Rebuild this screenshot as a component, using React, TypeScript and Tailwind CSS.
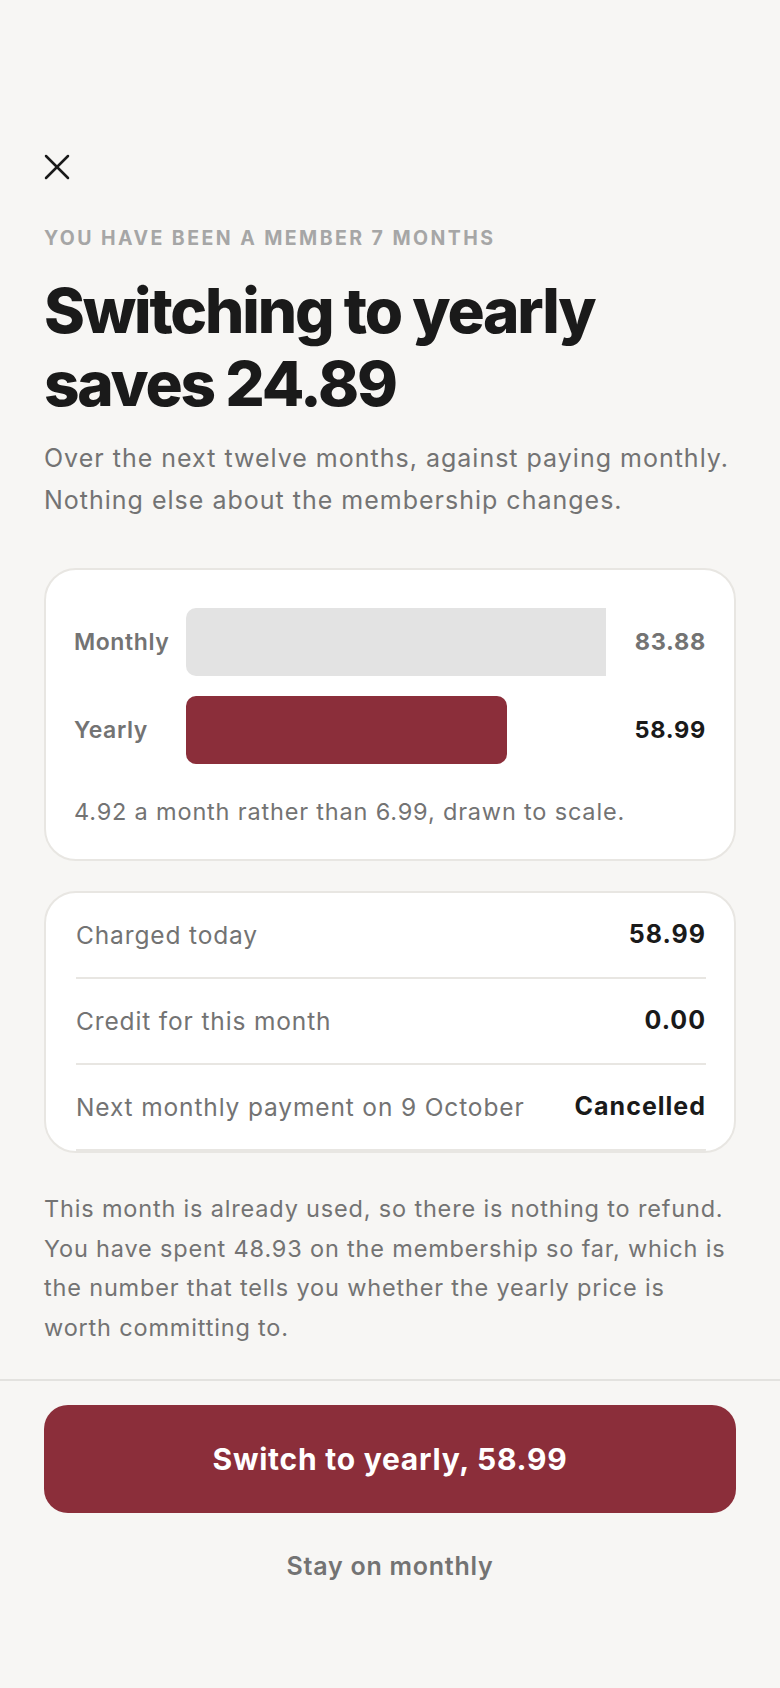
export default function App() {
  const rows = [
    { label: 'Charged today', value: '58.99' },
    { label: 'Credit for this month', value: '0.00' },
    { label: 'Next monthly payment on 9 October', value: 'Cancelled' },
  ];

  return (
    <div className="min-h-[1688px] bg-[#f7f6f4] text-[#1a1a1a]" style={{ fontFamily: 'Inter, "Noto Sans", sans-serif' }}>
      <div className="px-11 pt-[154px]">
        <button className="block h-[26px] w-[26px] text-[#1a1a1a]" aria-label="Close">
          <svg width="26" height="26" viewBox="0 0 26 26" fill="none" stroke="currentColor" strokeWidth="2.5" strokeLinecap="round">
            <line x1="2" y1="2" x2="24" y2="24" />
            <line x1="24" y1="2" x2="2" y2="24" />
          </svg>
        </button>

        <p className="mt-[46px] text-[19.5px] leading-[24px] font-bold uppercase tracking-[0.125em] text-[#a6a6a6]">
          You have been a member 7 months
        </p>

        <h1 className="mt-6 text-[62px] leading-[73px] font-extrabold tracking-[-0.035em] text-[#1a1a1a]">
          Switching to yearly
          <br />
          saves 24.89
        </h1>

        <p className="mt-[17px] text-[25px] leading-[42px] tracking-[0.04em] text-[#737373]">
          Over the next twelve months, against paying monthly.
          <br />
          Nothing else about the membership changes.
        </p>

        <div className="mt-[47px] rounded-[32px] border-2 border-[#e8e6e2] bg-white px-7 pt-[38px] pb-8">
          <div className="flex flex-col gap-5">
            <div className="grid grid-cols-[112px_1fr_100px] items-center">
              <span className="text-[23px] font-semibold tracking-[0.025em] text-[#737373]">Monthly</span>
              <div className="h-[68px]">
                <div className="h-full w-full rounded-l-[10px] bg-[#e3e3e3]" />
              </div>
              <span className="text-right text-[23.5px] font-bold tracking-[0.03em] text-[#737373]">83.88</span>
            </div>
            <div className="grid grid-cols-[112px_1fr_100px] items-center">
              <span className="text-[23px] font-semibold tracking-[0.025em] text-[#737373]">Yearly</span>
              <div className="h-[68px]">
                <div className="h-full w-[76.4%] rounded-[10px] bg-[#8b2e3a]" />
              </div>
              <span className="text-right text-[23.5px] font-bold tracking-[0.03em] text-[#1a1a1a]">58.99</span>
            </div>
          </div>
          <p className="mt-[33px] text-[23.5px] leading-[30px] tracking-[0.035em] text-[#737373]">
            4.92 a month rather than 6.99, drawn to scale.
          </p>
        </div>

        <div className="mt-[30px] overflow-hidden rounded-[32px] border-2 border-[#e8e6e2] bg-white pl-[30px] pr-7">
          {rows.map((row) => (
            <div key={row.label} className="flex h-[86px] items-center justify-between border-b-2 border-[#e8e6e2]">
              <span className="text-[24.5px] tracking-[0.035em] text-[#737373]">{row.label}</span>
              <span className="text-[25px] font-bold tracking-[0.04em] text-[#1a1a1a]">{row.value}</span>
            </div>
          ))}
        </div>

        <p className="mt-9 max-w-[688px] text-[23.5px] leading-[39.5px] tracking-[0.035em] text-[#737373]">
          This month is already used, so there is nothing to refund. You have spent 48.93 on the membership so far, which is the number that tells you whether the yearly price is worth committing to.
        </p>
      </div>

      <div className="mt-8 border-t-2 border-[#e3e2df] px-11 pt-6">
        <button className="flex h-[108px] w-full items-center justify-center rounded-[24px] bg-[#8b2e3a] text-[30px] font-bold tracking-[0.025em] text-white">
          Switch to yearly, 58.99
        </button>
        <button className="mt-[37px] block h-8 w-full text-center text-[25px] leading-8 font-semibold tracking-[0.03em] text-[#737373]">
          Stay on monthly
        </button>
      </div>
    </div>
  );
}
